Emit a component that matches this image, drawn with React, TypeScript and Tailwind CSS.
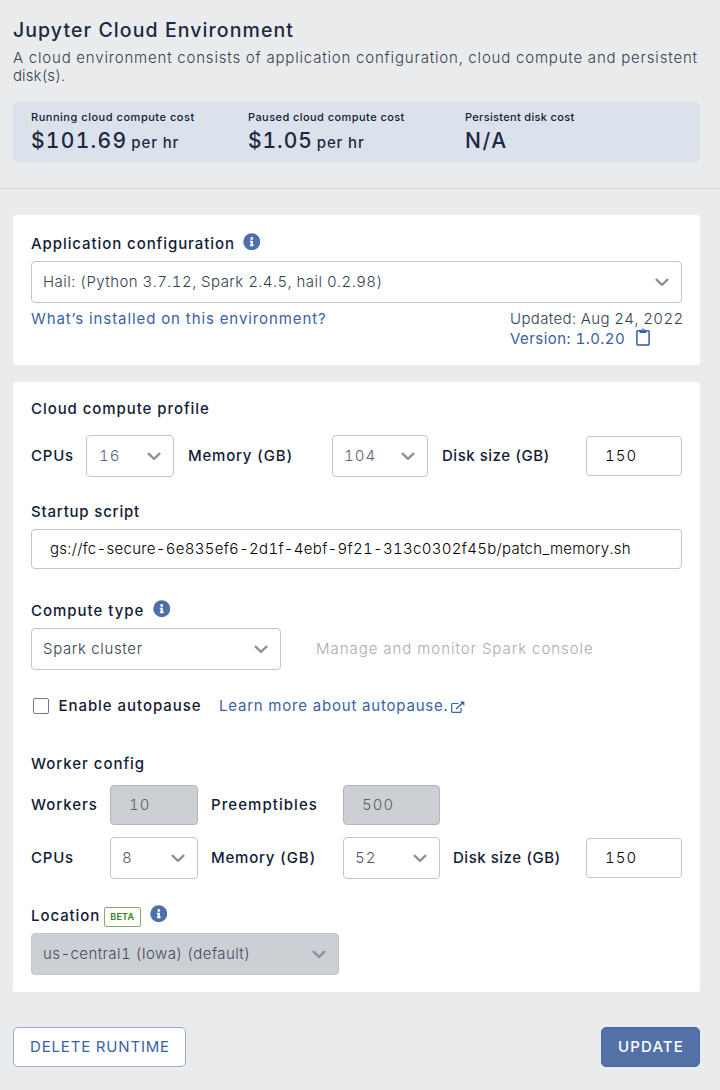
import type { ReactNode } from "react";

function Info({ className = "" }: { className?: string }) {
  return (
    <svg viewBox="0 0 512 512" className={`size-[17.5px] shrink-0 ${className}`} aria-hidden="true">
      <circle cx="256" cy="256" r="248" fill="#4d70aa" />
      <path
        fill="#fff"
        d="M256 118c23.2 0 42 18.800 42 42s-18.800 42-42 42-42-18.800-42-42 18.800-42 42-42zm56 254c0 6.600-5.400 12-12 12h-88c-6.600 0-12-5.400-12-12v-24c0-6.600 5.400-12 12-12h12v-64h-12c-6.600 0-12-5.400-12-12v-24c0-6.600 5.400-12 12-12h64c6.600 0 12 5.400 12 12v100h12c6.600 0 12 5.400 12 12v24z"
      />
    </svg>
  );
}

function Chevron() {
  return (
    <svg viewBox="0 0 14 9" className="h-[9px] w-[14px] shrink-0" fill="none" aria-hidden="true">
      <path d="M1.500 1.700 7 6.900l5.500-5.200" stroke="#8b91a0" strokeWidth="2.300" strokeLinecap="round" strokeLinejoin="round" />
    </svg>
  );
}

function Select({ children, className }: { children: ReactNode; className: string }) {
  return (
    <div className={`flex h-[42px] shrink-0 items-center justify-between rounded border pl-[11px] pr-[12.5px] ${className}`}>
      {children}
      <Chevron />
    </div>
  );
}

function NumberBox({ value, className }: { value: string; className: string }) {
  return (
    <div className={`flex h-10 shrink-0 items-center rounded border pl-[18px] font-light tracking-[1.050px] ${className}`}>
      {value}
    </div>
  );
}

function Cost({ label, children }: { label: ReactNode; children: ReactNode }) {
  return (
    <div className="w-[217px]">
      <div className="h-[14px] text-[11px] leading-[14px] font-medium">{label}</div>
      <div className="mt-[4px] flex items-baseline text-[21px] leading-[26px] font-medium text-[#1c2942]">{children}</div>
    </div>
  );
}

const field = "border-[#c3c5cb] bg-white";
const disabled = "border-[#b3b6bd] bg-[#cccfd4]";

export default function App() {
  return (
    <div className="h-[1090px] w-[720px] overflow-hidden bg-[#eaebed] font-['Inter',sans-serif] text-[15px] leading-[18px] whitespace-nowrap text-[#111c36] tabular-nums">
      <header className="h-[189px] border-b border-[#cfd2d6] px-[13px] pt-[18px]">
        <h1 className="text-[19.5px] leading-[24px] font-medium tracking-[1.080px] text-[#1c2942]">Jupyter Cloud Environment</h1>
        <p className="mt-[7px] leading-[18px] font-light text-[#333f52]">
          <span className="tracking-[0.82px]">A cloud environment consists of application configuration, cloud compute and persistent</span>
          <br />
          <span className="tracking-[0.06px]">disk(s).</span>
        </p>
        <div className="mt-[17px] flex h-[60px] w-[687px] rounded bg-[#dce2ec] pt-[8px] pl-[18px]">
          <Cost label={<span className="tracking-[0.52px]">Running cloud compute cost</span>}>
            <span className="tracking-[1.300px]">$101.69</span>
            <span className="ml-[4px] text-[15px] tracking-[0.85px]">per hr</span>
          </Cost>
          <Cost label={<span className="tracking-[0.43px]">Paused cloud compute cost</span>}>
            <span className="tracking-[0.95px]">$1.05</span>
            <span className="ml-[4px] text-[15px] tracking-[0.85px]">per hr</span>
          </Cost>
          <Cost label={<span className="tracking-[0.33px]">Persistent disk cost</span>}>
            <span className="tracking-[1.6px]">N/A</span>
          </Cost>
        </div>
      </header>

      <section className="mt-[26px] ml-[13px] h-[150px] w-[687px] rounded-[3px] bg-white px-[18px] pt-[18px]">
        <div className="flex h-[22px] items-center font-medium">
          <span className="tracking-[0.92px]">Application configuration</span>
          <Info className="mb-[5px] ml-[8px]" />
        </div>
        <Select className={`mt-[6px] font-light text-[#333f52] ${field}`}>
          <span className="tracking-[0.45px]">Hail: (Python 3.7.12, Spark 2.4.5, hail 0.2.98)</span>
        </Select>
        <div className="mt-[7px] flex justify-between">
          <a className="tracking-[0.91px] text-[#3a62a4]">What’s installed on this environment?</a>
          <div className="w-[172px]">
            <div className="font-light tracking-[0.37px] text-[#333f52]">Updated: Aug 24, 2022</div>
            <div className="flex h-[21px] items-center text-[#3a62a4]">
              <span className="tracking-[0.45px]">Version: 1.0.20</span>
              <svg viewBox="0 0 14 18" className="mb-[3px] ml-[10.500px] h-[18px] w-[14px]" fill="none" aria-hidden="true">
                <rect x="0.900" y="2.700" width="12.200" height="14.300" rx="0.900" stroke="#2f5ca5" strokeWidth="1.500" />
                <path d="M3.600 2.200h1.800a1.600 1.600 0 0 1 3.200 0h1.800v2.800H3.600z" fill="#2f5ca5" />
                <circle cx="7" cy="2.200" r="0.600" fill="#fff" />
              </svg>
            </div>
          </div>
        </div>
      </section>

      <section className="mt-[17px] ml-[13px] h-[610px] w-[687px] rounded-[3px] bg-white px-[18px] pt-[17px]">
        <h2 className="leading-[20px] font-medium tracking-[0.93px]">Cloud compute profile</h2>
        <div className="mt-[16px] flex h-[42px] items-center font-medium">
          <span className="w-[55px] tracking-[0.76px]">CPUs</span>
          <Select className={`w-[88px] font-light text-[#5a6478] ${field}`}><span className="pl-px tracking-[1px]">16</span></Select>
          <span className="ml-[14px] w-[144px] tracking-[0.79px]">Memory (GB)</span>
          <Select className={`w-[96px] font-light text-[#5a6478] ${field}`}><span className="tracking-[1px]">104</span></Select>
          <span className="ml-[14px] w-[144px] tracking-[0.52px]">Disk size (GB)</span>
          <NumberBox value="150" className={`w-[96px] text-black ${field}`} />
        </div>

        <h2 className="mt-[25px] leading-[20px] font-medium tracking-[0.8px]">Startup script</h2>
        <div className={`mt-[7px] flex h-10 items-center rounded border pl-[18px] font-light text-black ${field}`}>
          <span className="tracking-[0.29px]">gs://fc-secure-6e835ef6-2d1f-4ebf-9f21-313c0302f45b/patch_memory.sh</span>
        </div>

        <div className="mt-[32px] flex h-[20px] items-center font-medium">
          <span className="tracking-[0.98px]">Compute type</span>
          <Info className="mb-[4px] ml-[8.500px]" />
        </div>
        <div className="mt-[7px] flex items-center">
          <Select className={`w-[250px] font-light text-[#333f52] ${field}`}><span className="tracking-[0.65px]">Spark cluster</span></Select>
          <span className="ml-[35px] font-light tracking-[0.96px] text-[#a9abb0]">Manage and monitor Spark console</span>
        </div>

        <div className="mt-[26px] flex h-[20px] items-center">
          <span className="ml-[1.500px] size-[16px] rounded-[2px] border border-[#757a85]" />
          <span className="ml-[10px] font-medium tracking-[0.94px]">Enable autopause</span>
          <a className="ml-[17.500px] tracking-[0.81px] text-[#3a62a4]">Learn more about autopause.</a>
          <svg viewBox="0 0 14 12" className="mt-px ml-[3px] h-[12px] w-[14px]" fill="none" stroke="#3a62a4" aria-hidden="true">
            <path d="M7.500 2.500H1.600a.9.900 0 0 0-.9.900v7a.9.900 0 0 0 .9.900h7.600a.9.900 0 0 0 .9-.9V7" strokeWidth="1.200" />
            <path d="m5 8 6.500-6" strokeWidth="1.500" />
            <path d="M9 .6h4.400V5z" fill="#3a62a4" stroke="none" />
          </svg>
        </div>

        <h2 className="mt-[38px] leading-[20px] font-medium tracking-[0.96px]">Worker config</h2>
        <div className="mt-[11px] flex h-10 items-center font-medium">
          <span className="w-[79px] tracking-[0.97px]">Workers</span>
          <NumberBox value="10" className={`w-[88px] text-[#5f6165] ${disabled}`} />
          <span className="ml-[13px] w-[132px] tracking-[1.060px]">Preemptibles</span>
          <NumberBox value="500" className={`w-[97px] text-[#5f6165] ${disabled}`} />
        </div>
        <div className="mt-[12px] flex h-[42px] items-center font-medium">
          <span className="w-[79px] tracking-[0.76px]">CPUs</span>
          <Select className={`w-[88px] font-light text-[#4a5468] ${field}`}>8</Select>
          <span className="ml-[13px] w-[132px] tracking-[0.79px]">Memory (GB)</span>
          <Select className={`w-[97px] font-light text-[#4a5468] ${field}`}><span className="tracking-[1px]">52</span></Select>
          <span className="ml-[13px] w-[133px] tracking-[0.52px]">Disk size (GB)</span>
          <NumberBox value="150" className={`w-[96px] text-black ${field}`} />
        </div>

        <div className="mt-[27px] flex h-[20px] items-center font-medium">
          <span className="tracking-[0.93px]">Location</span>
          <span className="mt-[2px] ml-[3.500px] flex h-[19.500px] w-[37px] items-center justify-center rounded-[2px] border border-[#81ab70] bg-white text-[9px] font-semibold tracking-[0.25px] text-[#2f8410]">BETA</span>
          <Info className="mb-[4px] ml-[9px]" />
        </div>
        <Select className="mt-[7px] w-[308px] border-[#c3c6cc] bg-[#cccfd4] font-light text-[#424c5e]">
          <span className="tracking-[0.41px]">us-central1 (Iowa) (default)</span>
        </Select>
      </section>

      <footer className="mt-[35px] flex w-[700px] justify-between pl-[13px]">
        <button className="flex h-10 w-[173px] items-center justify-center rounded-[5px] border border-[#9aabca] bg-white pl-px tracking-[0.82px] text-[#3a62a4]">DELETE RUNTIME</button>
        <button className="flex h-10 w-[99px] items-center justify-center rounded-[5px] border border-[#436bab] bg-[#5371a7] pl-px font-medium tracking-[1.100px] text-white">UPDATE</button>
      </footer>
    </div>
  );
}
